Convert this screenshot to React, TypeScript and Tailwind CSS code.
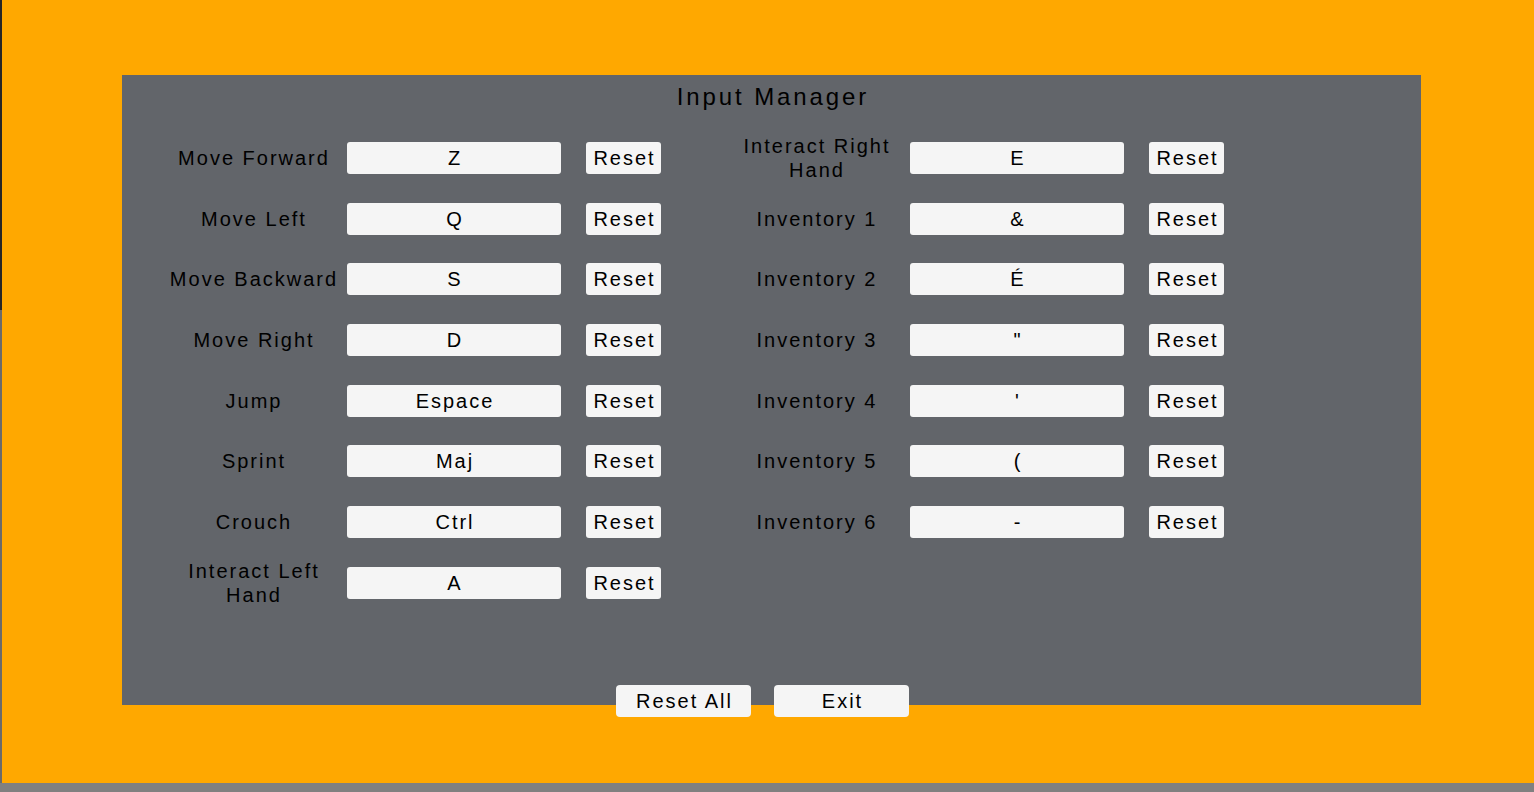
// Input Manager — key binding panel on an orange backdrop
const left = [
  { label: 'Move Forward', key: 'Z' },
  { label: 'Move Left', key: 'Q' },
  { label: 'Move Backward', key: 'S' },
  { label: 'Move Right', key: 'D' },
  { label: 'Jump', key: 'Espace' },
  { label: 'Sprint', key: 'Maj' },
  { label: 'Crouch', key: 'Ctrl' },
  { label: 'Interact Left Hand', key: 'A' },
]

const right = [
  { label: 'Interact Right Hand', key: 'E' },
  { label: 'Inventory 1', key: '&' },
  { label: 'Inventory 2', key: 'É' },
  { label: 'Inventory 3', key: '"' },
  { label: 'Inventory 4', key: "'" },
  { label: 'Inventory 5', key: '(' },
  { label: 'Inventory 6', key: '-' },
]

function BindingRow({ label, value }: { label: string; value: string }) {
  return (
    <div className="flex h-[32px] items-center">
      <div className="w-[170px] shrink-0 text-center text-[20px] leading-[24px] tracking-[2px] text-black">
        {label}
      </div>
      <div className="ml-[8px] flex h-[32px] w-[214px] shrink-0 items-center justify-center rounded-[3px] bg-[#f5f5f5] pl-[2px] text-[20px] tracking-[2px] text-black">
        {value}
      </div>
      <button className="ml-[25px] flex h-[32px] w-[75px] shrink-0 items-center justify-center rounded-[3px] bg-[#f5f5f5] pl-[2px] text-[20px] tracking-[2px] text-black">
        Reset
      </button>
    </div>
  )
}

export default function App() {
  return (
    <div
      className="flex h-[792px] w-[1534px] flex-col overflow-hidden bg-[#808080]"
      style={{ fontFamily: '"Liberation Sans", Arial, sans-serif' }}
    >
      <div className="flex h-[783px]">
        {/* ---- left edge ---- */}
        <div className="flex w-[2px] flex-col">
          <div className="h-[310px] bg-[#262626]" />
          <div className="flex-1 bg-[#6a6a6a]" />
        </div>

        {/* ---- orange backdrop ---- */}
        <div className="flex-1 bg-[#ffa800] pl-[120px] pt-[75px]">
          <div className="flex h-[630px] w-[1299px] flex-col bg-[#62656a] pl-[47px]">
            <h1 className="-ml-[47px] pl-[3px] pt-[8px] text-center text-[24px] leading-[28px] tracking-[2.9px] text-black">
              Input Manager
            </h1>

            <div className="mt-[31px] flex gap-x-[71px]">
              <div className="flex flex-col gap-y-[28.7px]">
                {left.map((r) => (
                  <BindingRow key={r.label} label={r.label} value={r.key} />
                ))}
              </div>
              <div className="flex flex-col gap-y-[28.7px]">
                {right.map((r) => (
                  <BindingRow key={r.label} label={r.label} value={r.key} />
                ))}
              </div>
            </div>

            {/* ---- bottom actions ---- */}
            <div className="-mb-[12px] -ml-[47px] mt-auto flex justify-center gap-x-[23px] pr-[18px]">
              <button className="flex h-[32px] w-[135px] items-center justify-center rounded-[4px] bg-[#f5f5f5] pl-[2px] text-[20px] tracking-[2px] text-black">
                Reset All
              </button>
              <button className="flex h-[32px] w-[135px] items-center justify-center rounded-[4px] bg-[#f5f5f5] pl-[2px] text-[20px] tracking-[2px] text-black">
                Exit
              </button>
            </div>
          </div>
        </div>
      </div>
      <div className="h-[9px] bg-[#808080]" />
    </div>
  )
}
